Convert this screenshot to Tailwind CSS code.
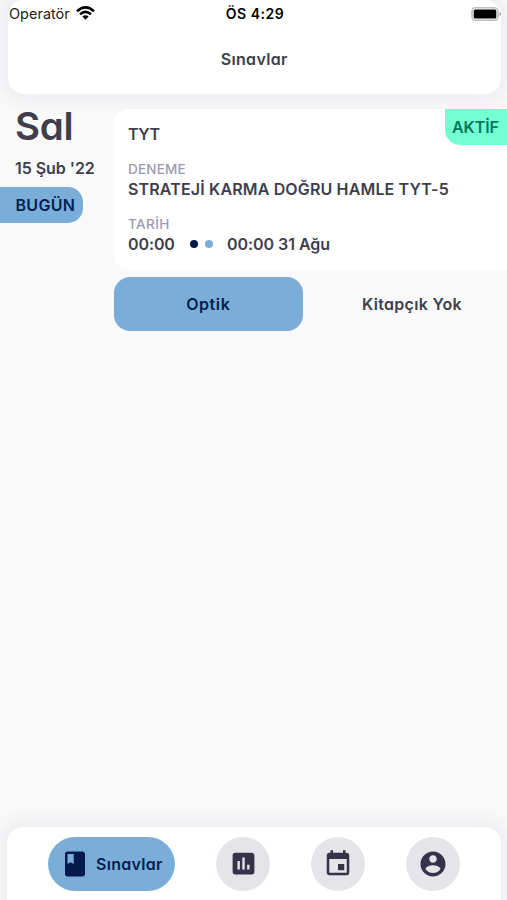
<!DOCTYPE html>
<html lang="tr">
<head>
<meta charset="utf-8">
<title>Sınavlar</title>
<script src="https://cdn.jsdelivr.net/npm/@tailwindcss/browser@4"></script>
</head>
<body class="bg-[#f9f9f9]">
<div class="flex h-[900px] w-[507px] flex-col overflow-hidden bg-[#f9f9f9] font-['Inter',sans-serif] font-semibold text-[#403e4c] whitespace-nowrap [font-feature-settings:'cv11','ss03']">
  <header class="mr-[6px] ml-[7.500px] h-[94px] shrink-0 rounded-[16px] bg-white shadow-[0_0_16px_8px_rgba(70,60,130,0.06)]">
    <div class="flex h-[27px] items-center justify-between pl-[1.500px] text-black [font-feature-settings:normal]">
      <div class="flex w-[200px] items-center gap-[6px]">
        <span class="text-[14.5px] font-normal text-[#222]">Operatör</span>
        <svg class="-mt-[2px] h-[14px] w-[19px]" viewBox="0 0 19 14" fill="none" stroke="#000" stroke-width="2.5"><path d="M1 5.2Q9.500-2.500 18 5.200M4 8.300Q9.500 3.400 15 8.300"/><path d="M6.300 10.500Q9.500 8 12.700 10.500L9.500 13.700Z" fill="#000" stroke="none"/></svg>
      </div>
      <span class="text-[14px] tracking-[0.5px]">ÖS 4:29</span>
      <div class="flex w-[200px] justify-end">
        <svg class="h-[14px] w-[30px]" viewBox="0 0 30 14"><rect x="1" y=".8" width="26" height="12.400" rx="3.500" fill="#fff" stroke="#bdbdbd" stroke-width="1.600"/><rect x="2.700" y="2.500" width="22.600" height="9" rx="1.500"/><path d="M28.500 5Q30 5.500 30 7T28.500 9Z" fill="#999"/></svg>
      </div>
    </div>
    <h1 class="mt-[20px] text-center text-[16px] leading-[24px] tracking-[0.35px]">Sınavlar</h1>
  </header>

  <main class="mt-[15px] flex flex-1">
    <section class="w-[113.500px] shrink-0">
      <div class="h-[36px] pl-[15px] text-[38.500px] leading-[34px] tracking-[-0.3px]">Sal</div>
      <div class="mt-[11px] h-[24px] pl-[15px] text-[16px] leading-[24px] tracking-[-0.05px]">15 Şub '22</div>
      <div class="mt-[7px] h-[36px] w-[83px] rounded-r-[15px] bg-[#7aaed8] pl-[15.500px] text-[16px] leading-[37px] tracking-[0.3px] text-[#021f54]">BUGÜN</div>
    </section>
    <section class="flex-1">
      <article class="relative h-[161px] rounded-l-[15px] bg-white pt-[13px] pl-[14.500px]">
        <span class="absolute top-0 right-0 h-[36px] w-[62px] rounded-bl-[15px] bg-[#73ffd2] pl-[7px] text-[16px] leading-[36px] tracking-[-0.1px] text-[#08795a]">AKTİF</span>
        <h2 class="text-[16px] leading-[24px] tracking-[-0.4px]">TYT</h2>
        <div class="mt-[13px] text-[13.500px] leading-[20px] font-medium tracking-[0.2px] text-[#9d9bae]">DENEME</div>
        <div class="text-[16px] leading-[20px] tracking-[0.150px]">STRATEJİ KARMA DOĞRU HAMLE TYT-5</div>
        <div class="mt-[15px] text-[13.500px] leading-[20px] font-medium tracking-[0.4px] text-[#9d9bae]">TARİH</div>
        <div class="flex items-center text-[16px] leading-[20px]">
          <span class="w-[62px] tracking-[-0.1px]">00:00</span>
          <i class="size-[8px] rounded-full bg-[#041a4d]"></i>
          <i class="ml-[6.500px] size-[8px] rounded-full bg-[#7aaed8]"></i>
          <span class="ml-[14.500px] tracking-[-0.05px]">00:00 31 Ağu</span>
        </div>
      </article>
      <div class="mt-[7px] flex h-[54px] items-center text-center text-[16px]">
        <button class="h-[54px] w-[189.500px] rounded-[16px] bg-[#7aaed8] tracking-[0.6px] text-[#021f54]">Optik</button>
        <span class="ml-[14px] w-[190px] tracking-[0.3px]">Kitapçık Yok</span>
      </div>
    </section>
  </main>

  <nav class="mr-[6px] ml-[7px] flex h-[73px] shrink-0 items-start gap-[41px] rounded-t-[16px] bg-white pt-[9.500px] pl-[41px] shadow-[0_0_16px_8px_rgba(70,60,130,0.06)]">
    <div class="flex h-[54px] w-[127px] items-center rounded-full bg-[#7aaed8] pl-[12px] text-[16px] text-[#021f54]">
      <svg class="size-[30px]" viewBox="0 0 24 24" fill="#041a4d"><path d="M18 2H6c-1.100 0-2 .9-2 2v16c0 1.100.9 2 2 2h12c1.100 0 2-.9 2-2V4c0-1.100-.9-2-2-2zM6 4h5v8l-2.500-1.500L6 12V4z"/></svg>
      <span class="ml-[6px] tracking-[0.3px]">Sınavlar</span>
    </div>
    <div class="flex size-[54px] items-center justify-center rounded-full bg-[#e5e4e9]">
      <svg class="size-[29px]" viewBox="0 0 24 24" fill="#353349"><path d="M19 3H5c-1.100 0-2 .9-2 2v14c0 1.100.9 2 2 2h14c1.100 0 2-.9 2-2V5c0-1.100-.9-2-2-2zM9 17H7v-7h2v7zm4 0h-2V7h2v10zm4 0h-2v-4h2v4z"/></svg>
    </div>
    <div class="flex size-[54px] items-center justify-center rounded-full bg-[#e5e4e9]">
      <svg class="size-[30px]" viewBox="0 0 24 24" fill="#353349"><path d="M17 12h-5v5h5v-5zM16 1v2H8V1H6v2H5c-1.110 0-1.990.9-1.990 2L3 19c0 1.100.89 2 2 2h14c1.100 0 2-.9 2-2V5c0-1.100-.9-2-2-2h-1V1h-2zm3 18H5V8h14v11z"/></svg>
    </div>
    <div class="flex size-[54px] items-center justify-center rounded-full bg-[#e5e4e9]">
      <svg class="size-[30px]" viewBox="0 0 24 24" fill="#353349"><path d="M12 2C6.480 2 2 6.480 2 12s4.480 10 10 10 10-4.480 10-10S17.520 2 12 2zm0 3c1.660 0 3 1.340 3 3s-1.340 3-3 3-3-1.340-3-3 1.340-3 3-3zm0 14.200c-2.500 0-4.710-1.280-6-3.220.03-1.990 4-3.080 6-3.080 1.990 0 5.970 1.090 6 3.080-1.290 1.940-3.500 3.220-6 3.220z"/></svg>
    </div>
  </nav>
</div>
</body>
</html>
